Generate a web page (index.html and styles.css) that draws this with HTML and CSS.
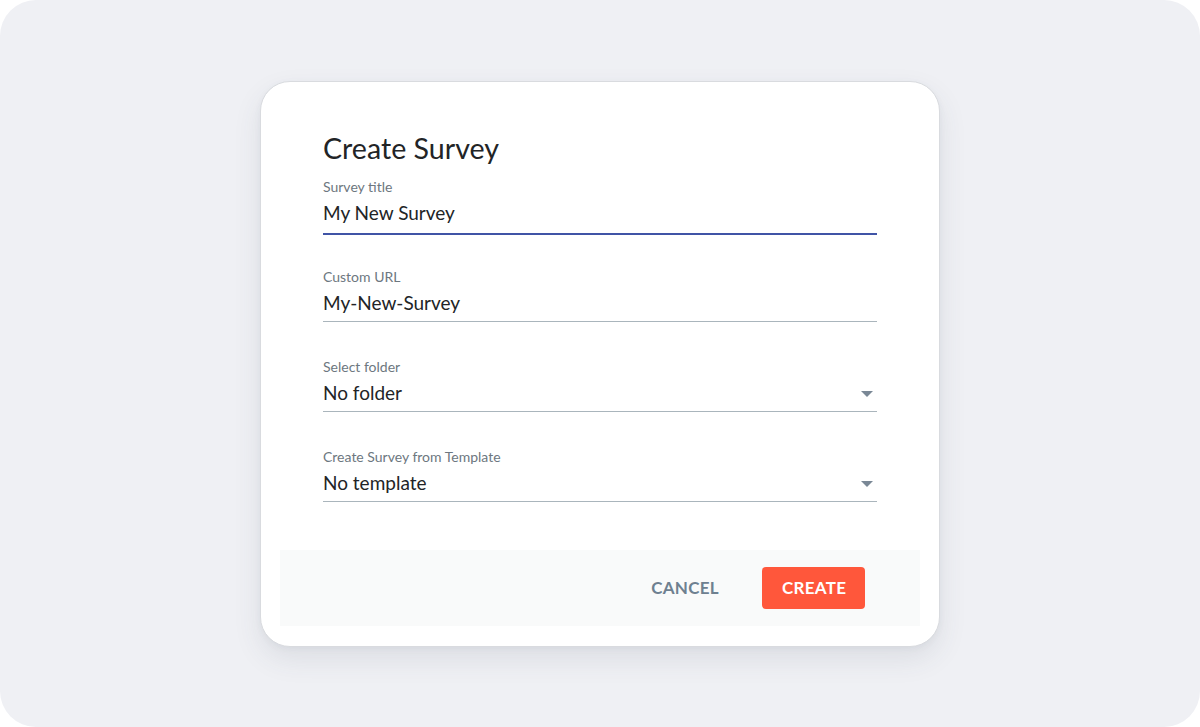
FILE: index.html
```html
<!DOCTYPE html>
<html lang="en">
<head>
<meta charset="utf-8">
<title>Create Survey</title>
<link rel="stylesheet" href="styles.css">
</head>
<body>
<div class="canvas">
  <div class="dialog">
    <div class="content">
      <h1 class="title">Create Survey</h1>
      <div class="field field-focused">
        <label class="label">Survey title</label>
        <div class="value">My New Survey</div>
      </div>
      <div class="field">
        <label class="label">Custom URL</label>
        <div class="value">My-New-Survey</div>
      </div>
      <div class="field">
        <label class="label">Select folder</label>
        <div class="value select">No folder<span class="arrow"></span></div>
      </div>
      <div class="field">
        <label class="label">Create Survey from Template</label>
        <div class="value select">No template<span class="arrow"></span></div>
      </div>
    </div>
    <div class="footer">
      <button class="btn btn-cancel">CANCEL</button>
      <button class="btn btn-create">CREATE</button>
    </div>
  </div>
</div>
</body>
</html>
```

FILE: styles.css
```css
html, body {
  margin: 0;
  padding: 0;
  background: #ffffff;
}
body {
  font-family: Lato, "Open Sans", "Liberation Sans", sans-serif;
}
.canvas {
  width: 1200px;
  height: 727px;
  background: #eff0f4;
  border-radius: 36px;
  display: flex;
  align-items: center;
  justify-content: center;
}
.dialog {
  box-sizing: border-box;
  width: 680px;
  height: 566px;
  background: #ffffff;
  border: 1px solid #d9dbdf;
  border-radius: 30px;
  box-shadow: 0 12px 28px rgba(60, 70, 90, 0.10), 0 2px 6px rgba(60, 70, 90, 0.05);
  padding: 19px 19px 20px 19px;
  display: flex;
  flex-direction: column;
}
.content {
  padding: 30px 43px 0 43px;
  flex: 1;
}
.title {
  margin: 0;
  font-size: 28.6px;
  line-height: 34px;
  font-weight: 400;
  color: #222426;
  margin-bottom: 14px;
}
.field {
  display: flex;
  flex-direction: column;
  border-bottom: 1px solid #aab5bc;
  padding-bottom: 6px;
  margin-bottom: 37px;
}
.field-focused {
  border-bottom: 2px solid #4054a6;
  padding-bottom: 8px;
  margin-bottom: 34px;
}
.label {
  font-size: 14px;
  line-height: 16px;
  color: #6d7780;
  margin-bottom: 6px;
}
.value {
  font-size: 19px;
  line-height: 24px;
  color: #222426;
}
.select {
  display: flex;
  justify-content: space-between;
  align-items: center;
}
.arrow {
  width: 0;
  height: 0;
  border-left: 6px solid transparent;
  border-right: 6px solid transparent;
  border-top: 6px solid #7a8896;
  margin-right: 4px;
  margin-top: 2px;
}
.footer {
  height: 76px;
  background: #f9fafa;
  display: flex;
  align-items: center;
  justify-content: flex-end;
  padding-right: 55px;
  gap: 23px;
}
.btn {
  font-family: Lato, "Open Sans", "Liberation Sans", sans-serif;
  font-size: 17px;
  font-weight: 700;
  letter-spacing: 0.3px;
  border: none;
  border-radius: 4px;
  height: 42px;
  padding: 0 20px;
  cursor: pointer;
}
.btn-cancel {
  background: transparent;
  color: #6e8090;
}
.btn-create {
  background: #ff573b;
  color: #ffffff;
  width: 103px;
}
```
